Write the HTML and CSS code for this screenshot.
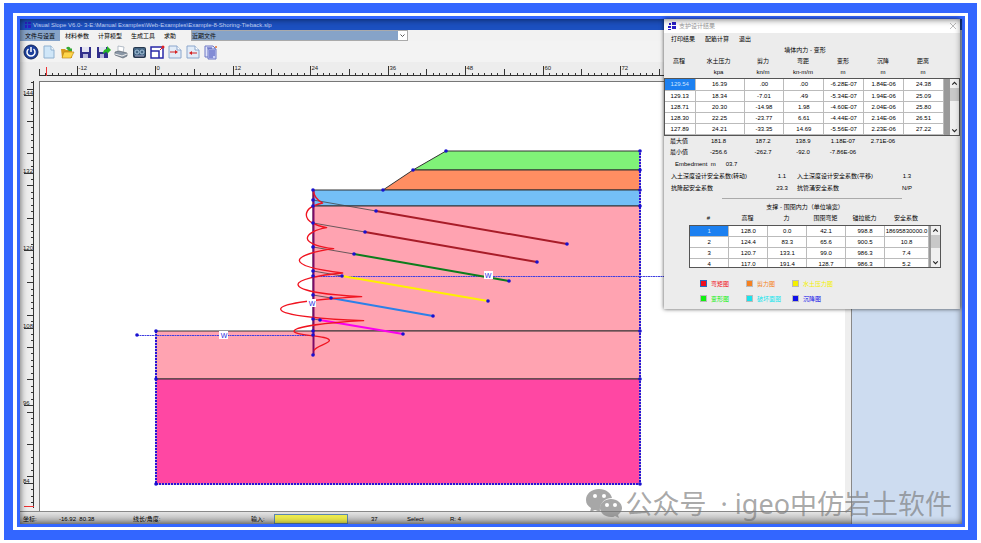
FILE: index.html
```
<!DOCTYPE html>
<html lang="zh-CN">
<head>
    <meta charset="UTF-8">
    <meta name="viewport" content="width=device-width, initial-scale=1.0">
    <title>Visual Slope</title>
    <link rel="stylesheet" href="styles.css">
</head>
<body>
<div class="frame">
<div class="app">
    <header class="titlebar">
        <svg class="logo" viewBox="0 0 8 8"><path d="M1 1h2v2H1zM4 1h3v2H4zM1 4h2v3H1zM4 4h3v3H4z" fill="#2b1fc4"/></svg>
        <span>Visual Slope V6.0- 3-E:\Manual Examples\Web-Examples\Example-8-Shoring-Tieback.slp</span>
    </header>

    <div class="body">
        <main class="main">
            <nav class="menu">
                <button class="on">文件与设置</button>
                <button>材料参数</button>
                <button>计算模型</button>
                <button>生成工具</button>
                <button>求助</button>
                <div class="recent">
                    <select aria-label="近期文件"><option>近期文件</option></select>
                    <svg viewBox="0 0 9 9"><path d="M2.500 3.500l2 2 2-2" fill="none" stroke="#555"/></svg>
                </div>
            </nav>

            <div class="toolbar">
                <button aria-label="电源"><svg viewBox="0 0 16 16"><circle cx="8" cy="8" r="7" fill="#1c3f9c" stroke="#12275e"/><path d="M5.500 5a4 4 0 1 0 5 0M8 3v5" fill="none" stroke="#fff" stroke-width="1.500"/></svg></button>
                <button aria-label="新建"><svg viewBox="0 0 16 16"><path d="M3 2h7l3 4v8H3z" fill="#cfe6f8" stroke="#8fb0cf"/><path d="M10 2v4h3" fill="#fff" stroke="#8fb0cf"/></svg></button>
                <button aria-label="打开"><svg viewBox="0 0 16 16"><path d="M2 5h4l1 1h6v8H3z" fill="#d79a1c"/><path d="M5 8h10l-3 6H3z" fill="#ffd64a" stroke="#b07c10" stroke-width=".6"/><path d="M7 4q3-3 5 1l1-1v3h-3" fill="#35a835"/></svg></button>
                <button aria-label="保存"><svg viewBox="0 0 16 16"><path d="M3 3h11v11H3z" fill="#32308c"/><path d="M5 3h7v5H5z" fill="#e4e4f2"/><path d="M6 10h5v4H6z" fill="#b9b9dc"/></svg></button>
                <button aria-label="另存"><svg viewBox="0 0 16 16"><path d="M2 3h11v11H2z" fill="#32308c"/><path d="M4 3h7v5H4z" fill="#e4e4f2"/><path d="M5 10h4v4H5z" fill="#b9b9dc"/><path d="M8 10q0-5 4-5V2l4 4-4 4V8q-2 0-4 2z" fill="#27b427"/></svg></button>
                <button aria-label="打印"><svg viewBox="0 0 16 16"><path d="M5 2l6 1-1 6-5-1z" fill="#fff" stroke="#8897a8" stroke-width=".6"/><path d="M2 8l4-1 8 2v3l-4 2-8-3z" fill="#8a97a6" stroke="#4b5662" stroke-width=".6"/><path d="M2 10l7 2 5-2" fill="none" stroke="#eee"/></svg></button>
                <button aria-label="查看"><svg viewBox="0 0 16 16"><rect x="2" y="3" width="13" height="11" rx="2" fill="#26384f"/><rect x="3" y="4" width="11" height="8" rx="1" fill="#466785"/><circle cx="6" cy="8" r="2" fill="none" stroke="#a8c4dc"/><circle cx="11" cy="8" r="2" fill="none" stroke="#a8c4dc"/><path d="M4 12h9" stroke="#aac"/></svg></button>
                <button aria-label="缩放"><svg viewBox="0 0 16 16"><path d="M2 3h12v11H2zM2 7h8v7" fill="#fff" stroke="#2a2aa8" stroke-width="1.500"/><path d="M11 6l3-3" stroke="#e02020"/><circle cx="14" cy="3" r="1.500" fill="#e02020"/></svg></button>
                <button aria-label="导入"><svg viewBox="0 0 16 16"><path d="M2 2h8l4 4v8H2z" fill="#e2ecf8" stroke="#8ba6cc"/><path d="M10 2v4h4" fill="#fff" stroke="#8ba6cc"/><path d="M3 8h6" stroke="#d42020"/><path d="M8 6l3 2-3 2z" fill="#d42020"/></svg></button>
                <button aria-label="导出"><svg viewBox="0 0 16 16"><path d="M2 2h8l4 4v8H2z" fill="#e2ecf8" stroke="#8ba6cc"/><path d="M10 2v4h4" fill="#fff" stroke="#8ba6cc"/><path d="M6 9h6" stroke="#d42020"/><path d="M7 7L4 9l3 2z" fill="#d42020"/></svg></button>
                <button aria-label="报告"><svg viewBox="0 0 16 16"><path d="M2 2h8l2 2v9H2z" fill="#dfe3fa" stroke="#6d77c4"/><path d="M5 5h8v10H5z" fill="#c9cff6" stroke="#6d77c4"/><path d="M4 4h5M6 7h6M6 9h6M6 11h6M6 13h4" stroke="#3c49b4"/><circle cx="13" cy="3" r="1" fill="#e07030"/></svg></button>
            </div>

            <svg class="ruler-top" id="rulerTop" viewBox="20 62 832 19" preserveAspectRatio="xMinYMin slice"></svg>

            <div class="work">
                <svg class="ruler-left" id="rulerLeft" viewBox="20 81 19 430"></svg>
                <div class="stage">
                    <svg viewBox="40 82 805 429">
                        <!-- soil layers -->
                        <g stroke="#333" stroke-width="1">
                            <path d="M446 151H640V170H413z" fill="#80f278"/>
                            <path d="M413 170H640V190H383z" fill="#ff8e62"/>
                            <path d="M313 190H640V206H313z" fill="#74bff7"/>
                            <path d="M313 206H640V331H313z" fill="#ffa3b1"/>
                            <path d="M156 331H640V379H156z" fill="#ffa3b1"/>
                            <path d="M156 379H640V484H156z" fill="#ff47a3"/>
                        </g>
                        <path d="M156 331V484H640V151" fill="none" stroke="#fff"/>
                        <path d="M156 331V484H640V151" fill="none" stroke="#2a10d8" stroke-width="2" stroke-dasharray="2 1"/>

                        <!-- water table -->
                        <path d="M313 276.500H845M137 335.500H313" stroke="#4040e0" stroke-dasharray="2 .5" stroke-width="1"/>

                        <!-- anchors -->
                        <g stroke="#444" stroke-width=".8">
                            <path d="M313 200L376 211M313 223L365 232M313 247L354 254M313 271L342 276M313 295L331 298M313 319L320 320"/>
                        </g>
                        <g stroke-width="2">
                            <path d="M376 211L567 244M365 232L537 262" stroke="#a81c28"/>
                            <path d="M354 254L509 281" stroke="#0c7d1c"/>
                            <path d="M342 276L488 301" stroke="#fff000"/>
                            <path d="M331 298L433 316" stroke="#2c80e8"/>
                            <path d="M320 320L403 334" stroke="#fa00ee"/>
                        </g>

                        <!-- wall and moment curve -->
                        <path d="M313.500 190V355" stroke="#7c0a68" stroke-width="2"/>
                        <g transform="translate(260 180) scale(.3333)">
                            <path fill="none" stroke="#f01420" stroke-width="4" stroke-linejoin="round" d="M160 31C162 50 170 60 188 69C155 76 139 90 139 105C139 125 170 138 200 143C165 149 142 162 142 175C142 190 180 202 221 206C165 213 118 228 118 241C118 260 190 272 248 279C170 286 114 300 114 313C114 335 220 346 305 350C180 357 62 370 62 387C62 408 210 418 311 422C200 428 102 440 102 454C102 468 212 466 208 482C206 492 166 498 162 512"/>
                        </g>

                        <g class="nodes" id="nodes"></g>

                        <g class="tags">
                            <rect x="484" y="271" width="9" height="8"/><text x="488" y="278">W</text>
                            <rect x="307" y="299" width="9" height="8"/><text x="312" y="306">W</text>
                            <rect x="219" y="331" width="9" height="8"/><text x="224" y="338">W</text>
                        </g>
                    </svg>
                </div>
            </div>

            <footer class="status">
                <span class="c1">坐标:</span>
                <span class="c2">-16.92&nbsp; 80.38</span>
                <span class="c3">线长/角度:</span>
                <label class="c4" for="cmd">输入:</label>
                <input id="cmd" type="text">
                <span class="c5">37</span>
                <span class="c6">Select</span>
                <span>R: 4</span>
            </footer>
        </main>
        <aside class="side"></aside>
    </div>

    <section class="dialog">
        <div class="dlg-title">
            <svg class="logo" viewBox="0 0 8 8"><path d="M1 1h2v2H1zM4 0h4v3H4zM0 4h3v2H0zM4 4h4v3H4zM0 7h3v1H0z" fill="#2a1fc8"/></svg>
            <span>支护设计结果</span>
            <button aria-label="关闭"><svg viewBox="0 0 8 8"><path d="M1 1l6 6M7 1L1 7" stroke="#aaa" stroke-width=".8"/></svg></button>
        </div>
        <nav class="dlg-menu">
            <button>打印结果</button>
            <button>配筋计算</button>
            <button>退出</button>
        </nav>

        <h2 class="cap">墙体内力 - 变形</h2>
        <div class="cols head">
            <span>高程</span><span>水土压力</span><span>剪力</span><span>弯距</span><span>变形</span><span>沉降</span><span>距离</span>
        </div>
        <div class="cols head">
            <span></span><span>kpa</span><span>kn/m</span><span>kn-m/m</span><span>m</span><span>m</span><span>m</span>
        </div>
        <div class="grid">
            <table class="wall">
                <colgroup><col class="k1"><col class="k2"><col><col><col><col><col></colgroup>
                <tr><td class="sel">129.54</td><td>16.39</td><td>.00</td><td>.00</td><td>-6.28E-07</td><td>1.84E-06</td><td>24.38</td></tr>
                <tr><td>129.13</td><td>18.34</td><td>-7.01</td><td>.49</td><td>-5.34E-07</td><td>1.94E-06</td><td>25.09</td></tr>
                <tr><td>128.71</td><td>20.30</td><td>-14.98</td><td>1.98</td><td>-4.60E-07</td><td>2.04E-06</td><td>25.80</td></tr>
                <tr><td>128.30</td><td>22.25</td><td>-23.77</td><td>6.61</td><td>-4.44E-07</td><td>2.14E-06</td><td>26.51</td></tr>
                <tr><td>127.89</td><td>24.21</td><td>-33.35</td><td>14.69</td><td>-5.56E-07</td><td>2.23E-06</td><td>27.22</td></tr>
            </table>
            <div class="scroll">
                <svg viewBox="0 0 8 8"><path d="M2 5l2-2 2 2" fill="none" stroke="#222"/></svg>
                <i></i>
                <svg viewBox="0 0 8 8"><path d="M2 3l2 2 2-2" fill="none" stroke="#222"/></svg>
            </div>
        </div>

        <div class="cols sum"><span>最大值</span><span>181.8</span><span>187.2</span><span>138.9</span><span>1.18E-07</span><span>2.71E-06</span></div>
        <div class="cols sum"><span>最小值</span><span>-256.6</span><span>-262.7</span><span>-92.0</span><span>-7.86E-06</span></div>
        <div class="embed"><span>Embedment&nbsp; m</span><span>03.7</span></div>
        <div class="safety"><span>入土深度设计安全系数(转动)</span><b>1.1</b><span>入土深度设计安全系数(平移)</span><b>1.3</b></div>
        <div class="safety"><span>抗隆起安全系数</span><b>23.3</b><span>抗管涌安全系数</span><b>N/P</b></div>
        <hr>

        <h2 class="cap">支撑 - 围囹内力（单位墙宽）</h2>
        <div class="brace">
            <div class="cols2 head"><span>#</span><span>高程</span><span>力</span><span>围囹弯矩</span><span>锚拉能力</span><span>安全系数</span></div>
            <div class="grid">
                <table class="strut">
                    <colgroup><col><col><col><col><col><col class="k3"></colgroup>
                    <tr><td class="sel">1</td><td>128.0</td><td>0.0</td><td>42.1</td><td>998.8</td><td>18695830000.0</td></tr>
                    <tr><td>2</td><td>124.4</td><td>83.3</td><td>65.6</td><td>900.5</td><td>10.8</td></tr>
                    <tr><td>3</td><td>120.7</td><td>133.1</td><td>99.0</td><td>986.3</td><td>7.4</td></tr>
                    <tr><td>4</td><td>117.0</td><td>191.4</td><td>128.7</td><td>986.3</td><td>5.2</td></tr>
                </table>
                <div class="scroll">
                    <svg viewBox="0 0 8 8"><path d="M2 5l2-2 2 2" fill="none" stroke="#222"/></svg>
                    <i></i>
                    <svg viewBox="0 0 8 8"><path d="M2 3l2 2 2-2" fill="none" stroke="#222"/></svg>
                </div>
            </div>
        </div>

        <div class="legend">
            <button class="red on">弯矩图</button>
            <button class="orange">剪力图</button>
            <button class="yellow">水土压力图</button>
            <button class="green">变形图</button>
            <button class="cyan">破坏面图</button>
            <button class="blue">沉降图</button>
        </div>
    </section>

    <div class="watermark">
        <svg viewBox="0 0 36 30">
            <path fill-rule="evenodd" d="M13 0C5 0 0 5 0 11c0 4 2 6 5 8l-1 4 5-2c2 1 4 1 5 1-1-8 5-13 12-13C25 4 20 0 13 0zM9 5a2 2 0 1 1 0 4 2 2 0 0 1 0-4zm9 0a2 2 0 1 1 0 4 2 2 0 0 1 0-4z"/>
            <path fill-rule="evenodd" d="M25 10c-6 0-11 4-11 9s5 9 11 9c2 0 3 0 4-1l4 2-1-3c2-2 4-4 4-7 0-5-5-9-11-9zm-4 4a2 2 0 1 1 0 4 2 2 0 0 1 0-4zm8 0a2 2 0 1 1 0 4 2 2 0 0 1 0-4z"/>
        </svg>
        <span>公众号&nbsp; · igeo中仿岩土软件</span>
    </div>
</div>
</div>
<script src="script.js"></script>
</body>
</html>
```
FILE: styles.css
```
*, *::before { box-sizing: border-box; }
body {
    margin: 0;
    padding: 3px 4px;
    min-height: 100vh;
    background: #fff;
    color: #000;
    font: 6px/10px "Liberation Sans", "Noto Sans CJK SC", sans-serif;
}
button { margin: 0; padding: 0; border: 0; background: none; font: inherit; color: inherit; }
svg { display: block; }

.frame { padding: 3px 3px 3px 4px; border: solid #3366ff; border-width: 10px 9px; }
.app { position: relative; border: 3px solid #3366ff; background: #eee; }
.app::after {
    content: "";
    position: absolute;
    inset: 0;
    box-shadow: inset 0 0 7px rgba(0, 0, 0, .65);
    pointer-events: none;
}

.titlebar { display: flex; align-items: center; gap: 1px; height: 11px; padding-left: 4px; background: #1c50c0; color: #c4d4f4; line-height: 8px; }
.logo { width: 8px; height: 8px; }

.body { display: flex; }
.main { flex: 1; min-width: 0; background: #ededed; border-right: 1px solid #888; }
.side { width: 110px; background: #cddcf0; }

.menu { display: flex; height: 11px; background: #f2f2f2; }
.menu button { margin-right: 9px; }
.menu button.on { width: 40px; margin-right: 5px; background: #86a3c8; }
.recent { position: relative; width: 217px; margin-left: 6px; border: 1px solid #aaa; background: #fff; }
.recent select { display: block; width: 206px; height: 9px; padding: 0; border: 0; background: #86a3c8; appearance: none; font: inherit; color: #111; }
.recent svg { position: absolute; right: 0; top: 0; width: 9px; height: 9px; }

.toolbar { display: flex; gap: 2px; height: 21px; padding: 1px 3px; background: #f3f3f3; }
.toolbar svg { width: 16px; height: 16px; }

.ruler-top { width: 100%; height: 19px; }
.work { display: flex; }
.ruler-left { width: 19px; height: 430px; }
.stage { flex: 1; padding-right: 6px; border: solid #777; border-width: 1px 0 0 1px; background: linear-gradient(to left, #eee 6px, #fff 6px); }
.stage svg { width: 100%; }
.tick { stroke: #333; stroke-width: 1; }
.tick-red { stroke: #e33; stroke-width: 1; }
.ruler-top text, .ruler-left text { font-size: 6px; fill: #222; }
.nodes circle { fill: #1810d0; }
.tags rect { fill: #fff; }
.tags text { font-size: 7px; fill: #2a2ae0; text-anchor: middle; }

.status { display: flex; height: 13px; padding: 2px 3px 0; border-top: 1px solid #888; background: linear-gradient(#e4e4e4, #aaa); }
.status input { width: 74px; height: 10px; margin-right: 23px; padding: 0 2px; border: 1px solid #5b86b0; background: #ecea4e; font: inherit; }
.c1 { width: 36px; }
.c2 { width: 74px; }
.c3 { width: 118px; }
.c4 { width: 23px; }
.c5 { width: 36px; }
.c6 { width: 43px; }

.dialog { position: absolute; top: 0; right: 2px; width: 296px; padding-bottom: 5px; background: #ececec; box-shadow: 0 0 4px rgba(0, 0, 0, .7); }
.dlg-title { display: flex; align-items: center; gap: 3px; height: 14px; padding: 0 3px 0 4px; background: #fff; color: #999; }
.dlg-title button { margin-left: auto; }
.dlg-title button svg { width: 8px; height: 8px; }
.dlg-menu { display: flex; gap: 10px; height: 12px; padding-left: 7px; }
.cap { margin: 0; font-size: 6px; font-weight: normal; line-height: 11px; text-align: center; padding-right: 14px; }
.brace .head, .head { line-height: 11px; text-align: center; }

.cols { display: grid; grid-template-columns: 30px 49px repeat(5, 40px); min-height: 11px; }
.grid { display: flex; border: 1px solid #555; background: #999; }
table { border-collapse: collapse; table-layout: fixed; background: #fff; text-align: center; }
td { height: 11px; padding: 0; border: solid #bbb; border-width: 0 1px 1px 0; line-height: 10px; white-space: nowrap; }
td.sel { background: #1c80f0; color: #cfe4ff; }
.wall { width: 279px; }
.k1 { width: 30px; }
.k2 { width: 49px; }
.k3 { width: 44px; }
.scroll { display: flex; flex-direction: column; width: 9px; margin-left: auto; background: #f0f0f0; }
.scroll svg { width: 9px; height: 9px; }
.scroll i { height: 13px; background: #c8c8c8; }
.scroll svg:last-child { margin-top: auto; }

.sum { line-height: 11px; text-align: center; }
.embed { display: flex; gap: 10px; padding-left: 11px; line-height: 12px; }
.safety { display: grid; grid-template-columns: 96px 30px 98px 24px; padding-left: 7px; line-height: 12px; }
.safety b { font-weight: normal; text-align: center; }
hr { width: 180px; margin: 4px 0 3px 58px; border: 0; border-top: 1px solid #aaa; }

.brace { width: 252px; margin-left: 25px; }
.cols2 { display: grid; grid-template-columns: repeat(5, 39px) 44px; height: 12px; }
.brace .grid { height: 43px; overflow: hidden; }
.strut { width: 239px; }

.legend { display: grid; grid-template-columns: repeat(3, 46px); row-gap: 5px; margin: 11px 0 0 36px; }
.legend button { display: flex; align-items: center; gap: 4px; line-height: 10px; white-space: nowrap; }
.legend button::before { content: ""; width: 7px; height: 7px; border: 1px solid #bbb; background: currentColor; }
.legend .on::before { border-color: #2a6ac0; }
.red { color: #f01020; }
.orange { color: #f58020; }
.yellow { color: #f4f000; }
.green { color: #10f010; }
.cyan { color: #18e4ec; }
.blue { color: #1010e8; }

.watermark { position: absolute; right: 10px; bottom: 3px; display: flex; align-items: center; gap: 4px; color: rgba(120, 120, 120, .65); font: 27px/34px "Noto Sans", "Noto Sans CJK SC", sans-serif; }
.watermark svg { width: 36px; height: 30px; fill: rgba(120, 120, 120, .65); }
```
FILE: script.js
```
const NS = 'http://www.w3.org/2000/svg';
const STEP = 6.46; // px per metre

function add(parent, name, attrs, text) {
    const el = document.createElementNS(NS, name);
    for (const k in attrs) el.setAttribute(k, attrs[k]);
    if (text !== undefined) el.textContent = text;
    parent.appendChild(el);
}

// horizontal ruler
const top_ = document.getElementById('rulerTop');
add(top_, 'path', { d: 'M39 75.5H852', class: 'tick' });
add(top_, 'path', { d: 'M46.5 67V76', class: 'tick-red' });
for (let v = -18; v <= 100; v++) {
    const x = Math.round(155 + v * STEP) + 0.5;
    const y = v % 12 === 0 ? 66 : v % 6 === 0 ? 69 : 73;
    add(top_, 'path', { d: `M${x} ${y}V76`, class: 'tick' });
    if (v % 12 === 0) add(top_, 'text', { x: x + 1, y: 70 }, v);
}

// vertical ruler
const left = document.getElementById('rulerLeft');
add(left, 'path', { d: 'M33.5 81V508', class: 'tick' });
add(left, 'path', { d: 'M24 506.5H34', class: 'tick-red' });
for (let v = 146; v >= 81; v--) {
    const y = Math.round(95 + (144 - v) * STEP) + 0.5;
    const x = v % 12 === 0 ? 24 : v % 5 === 0 ? 27 : 31;
    add(left, 'path', { d: `M${x} ${y}H34`, class: 'tick' });
    if (v % 12 === 0) add(left, 'text', { x: 23, y: y - 1 }, v);
}

const nodes = [
    [446, 151], [640, 151], [413, 170], [640, 170], [383, 190], [640, 190], [640, 206],
    [313, 190], [313, 200], [313, 206], [313, 223], [313, 247], [313, 271], [313, 276],
    [313, 295], [313, 319], [313, 331], [313, 335], [313, 355],
    [376, 211], [567, 244], [365, 232], [537, 262], [354, 254], [509, 281],
    [342, 276], [488, 301], [331, 298], [433, 316], [320, 320], [403, 334],
    [137, 335], [156, 331], [640, 331], [156, 379], [640, 379], [156, 484], [640, 484]
];
const group = document.getElementById('nodes');
nodes.forEach(([cx, cy]) => add(group, 'circle', { cx, cy, r: 1.8 }));
```
